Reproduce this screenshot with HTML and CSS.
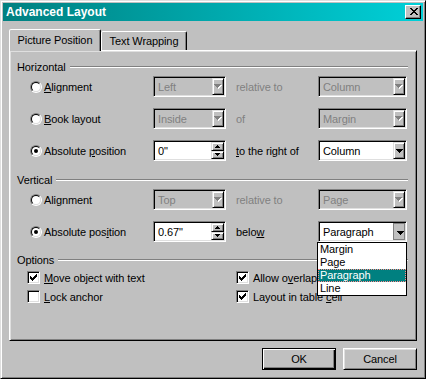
FILE: index.html
```html
<!DOCTYPE html>
<html lang="en">
<head>
    <meta charset="UTF-8">
    <title>Advanced Layout</title>
    <link rel="stylesheet" href="styles.css">
</head>
<body>
    <div class="window">
        <div class="titlebar">
            <span class="title">Advanced Layout</span>
            <div class="close-btn">
                <svg width="8" height="7" viewBox="0 0 8 7"><path d="M0 0h2v1H0zM6 0h2v1H6zM1 1h2v1H1zM5 1h2v1H5zM2 2h4v1H2zM3 3h2v1H3zM2 4h4v1H2zM1 5h2v1H1zM5 5h2v1H5zM0 6h2v1H0zM6 6h2v1H6z"/></svg>
            </div>
        </div>

        <div class="tabs">
            <div class="tab active">Picture Position</div>
            <div class="tab">Text Wrapping</div>
        </div>

        <div class="panel">
            <!-- Horizontal -->
            <div class="group-title"><span>Horizontal</span><i class="etch"></i></div>
            <div class="rows">
                <div class="row">
                    <div class="option"><span class="radio"></span><span><u>A</u>lignment</span></div>
                    <div class="combo disabled">
                        <span class="value">Left</span>
                        <span class="drop-btn"><svg width="8" height="5" viewBox="0 0 8 5"><path class="shade" d="M1 1h7v1H1zM2 2h5v1H2zM3 3h3v1H3zM4 4h1v1H4z"/><path d="M0 0h7v1H0zM1 1h5v1H1zM2 2h3v1H2zM3 3h1v1H3z"/></svg></span>
                    </div>
                    <span class="rel dim">relative to</span>
                    <div class="combo disabled">
                        <span class="value">Column</span>
                        <span class="drop-btn"><svg width="8" height="5" viewBox="0 0 8 5"><path class="shade" d="M1 1h7v1H1zM2 2h5v1H2zM3 3h3v1H3zM4 4h1v1H4z"/><path d="M0 0h7v1H0zM1 1h5v1H1zM2 2h3v1H2zM3 3h1v1H3z"/></svg></span>
                    </div>
                </div>
                <div class="row">
                    <div class="option"><span class="radio"></span><span><u>B</u>ook layout</span></div>
                    <div class="combo disabled">
                        <span class="value">Inside</span>
                        <span class="drop-btn"><svg width="8" height="5" viewBox="0 0 8 5"><path class="shade" d="M1 1h7v1H1zM2 2h5v1H2zM3 3h3v1H3zM4 4h1v1H4z"/><path d="M0 0h7v1H0zM1 1h5v1H1zM2 2h3v1H2zM3 3h1v1H3z"/></svg></span>
                    </div>
                    <span class="rel dim">of</span>
                    <div class="combo disabled">
                        <span class="value">Margin</span>
                        <span class="drop-btn"><svg width="8" height="5" viewBox="0 0 8 5"><path class="shade" d="M1 1h7v1H1zM2 2h5v1H2zM3 3h3v1H3zM4 4h1v1H4z"/><path d="M0 0h7v1H0zM1 1h5v1H1zM2 2h3v1H2zM3 3h1v1H3z"/></svg></span>
                    </div>
                </div>
                <div class="row">
                    <div class="option"><span class="radio checked"></span><span>Absolute <u>p</u>osition</span></div>
                    <div class="combo">
                        <span class="value">0"</span>
                        <span class="spinner">
                            <span class="spin-btn"><svg width="5" height="3" viewBox="0 0 5 3"><path d="M2 0h1v1H2zM1 1h3v1H1zM0 2h5v1H0z"/></svg></span>
                            <span class="spin-btn"><svg width="5" height="3" viewBox="0 0 5 3"><path d="M0 0h5v1H0zM1 1h3v1H1zM2 2h1v1H2z"/></svg></span>
                        </span>
                    </div>
                    <span class="rel"><u>t</u>o the right of</span>
                    <div class="combo">
                        <span class="value">Column</span>
                        <span class="drop-btn"><svg width="7" height="4" viewBox="0 0 7 4"><path d="M0 0h7v1H0zM1 1h5v1H1zM2 2h3v1H2zM3 3h1v1H3z"/></svg></span>
                    </div>
                </div>
            </div>

            <!-- Vertical -->
            <div class="group-title group-gap"><span>Vertical</span><i class="etch"></i></div>
            <div class="rows">
                <div class="row">
                    <div class="option"><span class="radio"></span><span>Ali<u>g</u>nment</span></div>
                    <div class="combo disabled">
                        <span class="value">Top</span>
                        <span class="drop-btn"><svg width="8" height="5" viewBox="0 0 8 5"><path class="shade" d="M1 1h7v1H1zM2 2h5v1H2zM3 3h3v1H3zM4 4h1v1H4z"/><path d="M0 0h7v1H0zM1 1h5v1H1zM2 2h3v1H2zM3 3h1v1H3z"/></svg></span>
                    </div>
                    <span class="rel dim">relative to</span>
                    <div class="combo disabled">
                        <span class="value">Page</span>
                        <span class="drop-btn"><svg width="8" height="5" viewBox="0 0 8 5"><path class="shade" d="M1 1h7v1H1zM2 2h5v1H2zM3 3h3v1H3zM4 4h1v1H4z"/><path d="M0 0h7v1H0zM1 1h5v1H1zM2 2h3v1H2zM3 3h1v1H3z"/></svg></span>
                    </div>
                </div>
                <div class="row">
                    <div class="option"><span class="radio checked"></span><span>Absolute pos<u>i</u>tion</span></div>
                    <div class="combo">
                        <span class="value">0.67"</span>
                        <span class="spinner">
                            <span class="spin-btn"><svg width="5" height="3" viewBox="0 0 5 3"><path d="M2 0h1v1H2zM1 1h3v1H1zM0 2h5v1H0z"/></svg></span>
                            <span class="spin-btn"><svg width="5" height="3" viewBox="0 0 5 3"><path d="M0 0h5v1H0zM1 1h3v1H1zM2 2h1v1H2z"/></svg></span>
                        </span>
                    </div>
                    <span class="rel">belo<u>w</u></span>
                    <div class="combo open">
                        <span class="value">Paragraph</span>
                        <span class="drop-btn"><svg width="7" height="4" viewBox="0 0 7 4"><path d="M0 0h7v1H0zM1 1h5v1H1zM2 2h3v1H2zM3 3h1v1H3z"/></svg></span>
                        <ul class="listbox">
                            <li>Margin</li>
                            <li>Page</li>
                            <li class="selected">Paragraph</li>
                            <li>Line</li>
                        </ul>
                    </div>
                </div>
            </div>

            <!-- Options -->
            <div class="group-title options-gap"><span>Options</span><i class="etch"></i></div>
            <div class="checks">
                <div class="check-item">
                    <span class="check"><svg width="11" height="11" viewBox="0 0 11 11"><path d="M2 4h1v3H2zM3 5h1v3H3zM4 6h1v3H4zM5 5h1v3H5zM6 4h1v3H6zM7 3h1v3H7zM8 2h1v3H8z"/></svg></span>
                    <span><u>M</u>ove object with text</span>
                </div>
                <div class="check-item">
                    <span class="check"><svg width="11" height="11" viewBox="0 0 11 11"><path d="M2 4h1v3H2zM3 5h1v3H3zM4 6h1v3H4zM5 5h1v3H5zM6 4h1v3H6zM7 3h1v3H7zM8 2h1v3H8z"/></svg></span>
                    <span>Allow o<u>v</u>erlap</span>
                </div>
                <div class="check-item">
                    <span class="check"></span>
                    <span><u>L</u>ock anchor</span>
                </div>
                <div class="check-item">
                    <span class="check"><svg width="11" height="11" viewBox="0 0 11 11"><path d="M2 4h1v3H2zM3 5h1v3H3zM4 6h1v3H4zM5 5h1v3H5zM6 4h1v3H6zM7 3h1v3H7zM8 2h1v3H8z"/></svg></span>
                    <span>Layout in table <u>c</u>ell</span>
                </div>
            </div>
        </div>

        <div class="footer">
            <div class="btn default">OK</div>
            <div class="btn">Cancel</div>
        </div>
    </div>
</body>
</html>
```

FILE: styles.css
```css
:root {
    --face: #c0c0c0;
    --light: #dfdfdf;
    --shadow: #808080;
    --dark: #000000;
    --title-start: #008080;
    --title-end: #00d0d8;
    --select: #008080;
}

* {
    box-sizing: border-box;
}

body {
    margin: 0;
    font-family: 'Liberation Sans', Arial, sans-serif;
    font-size: 11px;
    letter-spacing: -0.1px;
    color: #000;
    background: var(--face);
}

u {
    text-decoration-thickness: 1px;
    text-underline-offset: 1px;
}

.window {
    width: 426px;
    height: 379px;
    padding: 2px;
    background: var(--face);
    border: 1px solid;
    border-color: var(--light) var(--dark) var(--dark) var(--light);
    box-shadow: inset 1px 1px #fff, inset -1px -1px var(--shadow);
}

.titlebar {
    height: 18px;
    display: flex;
    align-items: center;
    justify-content: space-between;
    padding: 0 2px 0 3px;
    background: linear-gradient(90deg, var(--title-start), var(--title-end));
}

.title {
    color: #fff;
    font-weight: bold;
    font-size: 12px;
    letter-spacing: 0;
}

.close-btn {
    width: 16px;
    height: 14px;
    display: flex;
    align-items: center;
    justify-content: center;
    padding: 0 0 1px 1px;
    background: var(--face);
    border: 1px solid;
    border-color: #fff var(--dark) var(--dark) #fff;
    box-shadow: inset -1px -1px var(--shadow);
}

/* tabs */
.tabs {
    display: flex;
    align-items: flex-end;
    height: 21px;
    margin: 8px 6px 0;
}

.tab {
    height: 19px;
    padding: 0 7px;
    display: flex;
    align-items: center;
    background: var(--face);
    border: 1px solid;
    border-bottom: none;
    border-color: #fff var(--dark) transparent #fff;
    border-radius: 2px 2px 0 0;
    box-shadow: inset -1px 0 var(--shadow);
}

.tab.active {
    position: relative;
    z-index: 1;
    height: 22px;
    width: 92px;
    margin-bottom: -1px;
    justify-content: center;
    padding-bottom: 2px;
}

.tab:not(.active) {
    width: 86px;
    justify-content: center;
}

/* panel */
.panel {
    height: 291px;
    margin: 0 6px;
    padding: 9px 8px 0 7px;
    border: 1px solid;
    border-color: #fff var(--dark) var(--dark) #fff;
    box-shadow: inset 1px 1px var(--light), inset -1px -1px var(--shadow);
}

.group-title {
    display: flex;
    align-items: center;
    height: 13px;
    gap: 4px;
}

.etch {
    flex: 1;
    height: 2px;
    border-top: 1px solid var(--shadow);
    border-bottom: 1px solid #fff;
}

.group-gap {
    margin-top: 12px;
}

.options-gap {
    margin-top: 11px;
}

.rows {
    display: flex;
    flex-direction: column;
    gap: 11px;
    margin-top: 3px;
}

.row {
    display: grid;
    grid-template-columns: 136px 73px 92px 89px;
    height: 21px;
    align-items: center;
}

.option {
    display: flex;
    align-items: center;
    gap: 2px;
    padding-left: 13px;
}

.radio {
    position: relative;
    flex: none;
    width: 12px;
    height: 12px;
    border-radius: 50%;
    border: 1px solid;
    border-color: var(--shadow) #fff #fff var(--shadow);
}

.radio::before {
    content: "";
    position: absolute;
    inset: 0;
    border-radius: 50%;
    border: 1px solid;
    border-color: var(--dark) var(--light) var(--light) var(--dark);
    background: #fff;
}

.radio.checked::after {
    content: "";
    position: absolute;
    left: 3px;
    top: 3px;
    width: 4px;
    height: 4px;
    border-radius: 50%;
    background: #000;
}

.rel {
    padding-left: 10px;
}

.dim {
    color: var(--shadow);
}

/* combo / edit fields */
.combo {
    position: relative;
    display: flex;
    height: 21px;
    padding: 1px;
    background: #fff;
    border: 1px solid;
    border-color: var(--shadow) #fff #fff var(--shadow);
    box-shadow: inset 1px 1px var(--dark), inset -1px -1px var(--light);
}

.combo .value {
    flex: 1;
    padding: 1px 0 0 3px;
    line-height: 16px;
    overflow: hidden;
    white-space: nowrap;
}

.combo.disabled {
    background: var(--face);
    color: var(--shadow);
}

.drop-btn {
    width: 12px;
    height: 17px;
    margin-left: auto;
    display: flex;
    align-items: center;
    justify-content: center;
    background: var(--face);
    border: 1px solid;
    border-color: var(--light) var(--dark) var(--dark) var(--light);
    box-shadow: inset 1px 1px #fff, inset -1px -1px var(--shadow);
}

.drop-btn svg {
    display: block;
}

.drop-btn path {
    fill: #000;
}

.disabled .drop-btn path {
    fill: var(--shadow);
}

.disabled .drop-btn path.shade {
    fill: #fff;
}

.combo.open .drop-btn {
    border-color: var(--shadow);
    box-shadow: none;
    padding: 2px 0 0 2px;
}

.spinner {
    width: 13px;
    height: 17px;
    display: flex;
    flex-direction: column;
}

.spin-btn {
    flex: 1;
    display: flex;
    align-items: center;
    justify-content: center;
    background: var(--face);
    border: 1px solid;
    border-color: var(--light) var(--dark) var(--dark) var(--light);
    box-shadow: inset 1px 1px #fff, inset -1px -1px var(--shadow);
}

.spin-btn svg {
    display: block;
}

.listbox {
    position: absolute;
    z-index: 2;
    left: -2px;
    right: -1px;
    top: 20px;
    margin: 0;
    padding: 0;
    list-style: none;
    background: #fff;
    border: 1px solid var(--dark);
}

.listbox li {
    height: 13px;
    line-height: 13px;
    padding-left: 2px;
}

.listbox li.selected {
    background: var(--select);
    color: #fff;
    outline: 1px dotted #ff8a8a;
    outline-offset: -1px;
}

/* options */
.checks {
    display: grid;
    grid-template-columns: 219px 1fr;
    row-gap: 6px;
    margin-top: 5px;
}

.check-item {
    display: flex;
    align-items: center;
    gap: 4px;
    height: 13px;
    padding-left: 10px;
}

.check-item:nth-child(even) {
    padding-left: 0;
}

.check {
    flex: none;
    width: 13px;
    height: 13px;
    border: 1px solid;
    border-color: var(--shadow) #fff #fff var(--shadow);
    box-shadow: inset 1px 1px var(--dark), inset -1px -1px var(--light);
    background: #fff;
}

.check svg {
    display: block;
}

/* buttons */
.footer {
    display: flex;
    justify-content: flex-end;
    gap: 7px;
    margin: 7px 6px 0;
}

.btn {
    width: 74px;
    height: 22px;
    display: flex;
    align-items: center;
    justify-content: center;
    background: var(--face);
    border: 1px solid;
    border-color: #fff var(--dark) var(--dark) #fff;
    box-shadow: inset 1px 1px var(--light), inset -1px -1px var(--shadow);
}

.btn.default {
    border-color: var(--dark);
    box-shadow: inset 1px 1px #fff, inset -1px -1px var(--dark), inset -2px -2px var(--shadow);
}
```
